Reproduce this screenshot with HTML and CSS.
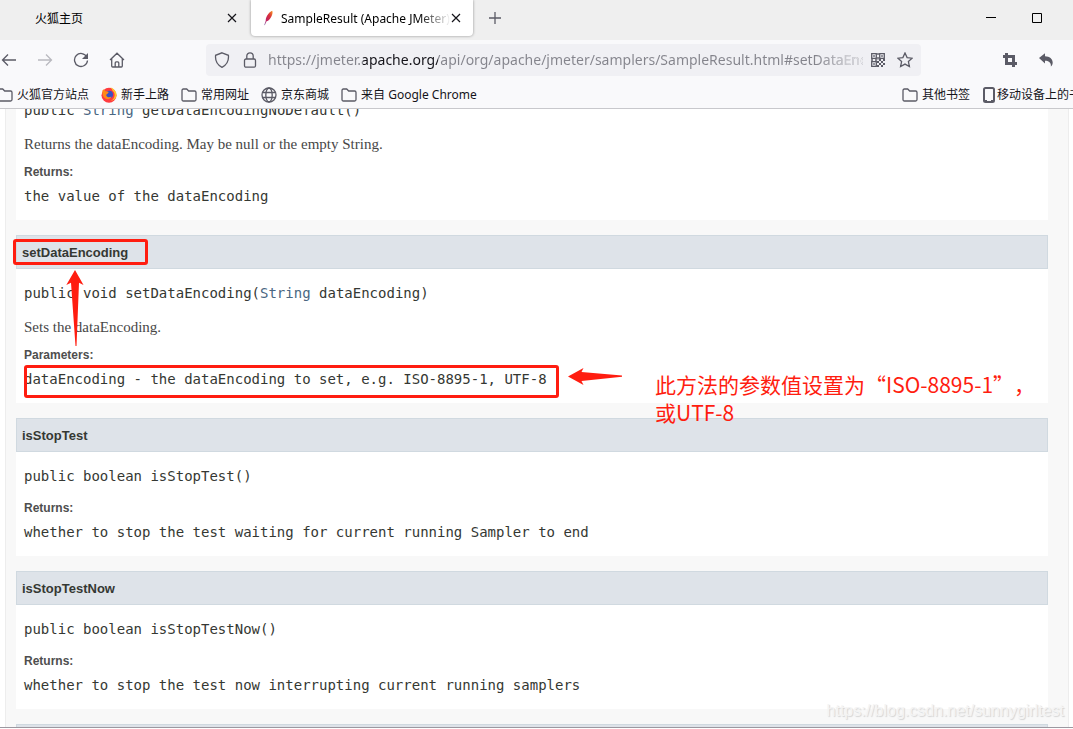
FILE: index.html
```html
<!DOCTYPE html>
<html lang="zh-CN">

<head>
    <meta charset="UTF-8" />
    <meta name="viewport" content="width=device-width, initial-scale=1.0" />
    <title>SampleResult (Apache JMeter)</title>
    <link rel="stylesheet" href="styles.css">
</head>

<body>
    <header class="browser">
        <div class="tabs">
            <div class="tab">
                <span class="tab-title">火狐主页</span>
                <button class="close" aria-label="Close tab"><svg width="10" height="10" viewBox="0 0 10 10"><path d="M1 1l8 8M9 1L1 9" /></svg></button>
            </div>
            <div class="tab active">
                <svg class="feather" width="16" height="16" viewBox="0 0 16 16">
                    <defs>
                        <linearGradient id="plume" x1="1" y1="0" x2="0" y2="1">
                            <stop offset="0" stop-color="#f69923" />
                            <stop offset=".35" stop-color="#d9303a" />
                            <stop offset=".7" stop-color="#be2064" />
                            <stop offset="1" stop-color="#8a7fb8" />
                        </linearGradient>
                    </defs>
                    <path fill="url(#plume)" d="M12.200.8c.8 1.400.2 3.700-.8 5.700-1 2-2 3.300-3.400 4.300l-1.400.4-1.800 4-.6-.2 1.500-4.300c-.1-2.600 1-4.800 2.600-6.800C9.500 2.500 11 1.200 12.200.8z" />
                </svg>
                <span class="tab-title">SampleResult (Apache JMeter)</span>
                <button class="close" aria-label="Close tab"><svg width="10" height="10" viewBox="0 0 10 10"><path d="M1 1l8 8M9 1L1 9" /></svg></button>
            </div>
            <button class="new-tab" aria-label="New tab"><svg width="12" height="12" viewBox="0 0 12 12"><path d="M6 0v12M0 6h12" /></svg></button>
            <div class="window-buttons">
                <button aria-label="Minimize"><svg width="10" height="10" viewBox="0 0 10 10"><path d="M0 4.500h10" /></svg></button>
                <button aria-label="Maximize"><svg width="10" height="10" viewBox="0 0 10 10"><path d="M.5.5h9v9h-9z" /></svg></button>
            </div>
        </div>

        <div class="toolbar">
            <div class="nav-buttons">
                <button aria-label="Back"><svg width="16" height="16" viewBox="0 0 16 16"><path d="M15 8H2M7 2.500L1.500 8 7 13.500" /></svg></button>
                <button aria-label="Forward" disabled><svg width="16" height="16" viewBox="0 0 16 16"><path d="M1 8h13M9 2.500L14.500 8 9 13.500" /></svg></button>
                <button aria-label="Reload"><svg width="16" height="16" viewBox="0 0 16 16"><path d="M13.800 5A6.500 6.500 0 1 0 14.500 8.500" /><path class="solid" d="M15 1v6H9z" /></svg></button>
                <button aria-label="Home"><svg width="16" height="16" viewBox="0 0 16 16"><path d="M1 8l7-6.800L15 8M2.700 6.700V14c0 .7.4 1 1 1h8.600c.6 0 1-.3 1-1V6.700M6.200 15v-4c0-.7.4-1.100 1-1.100h1.600c.6 0 1 .4 1 1.100v4" /></svg></button>
            </div>
            <div class="urlbar">
                <svg width="16" height="16" viewBox="0 0 16 16"><path d="M8 .8l6.400 2.500c.5 4.800-1 9.400-6.400 12-5.400-2.600-6.900-7.200-6.400-12z" /></svg>
                <svg width="16" height="16" viewBox="0 0 16 16"><rect x="2.500" y="7" width="11" height="8.200" rx="1.500" /><path d="M4.800 7V4a3.200 3.200 0 0 1 6.400 0v3" /></svg>
                <input type="text" class="address" aria-label="Address" spellcheck="false" value="https://jmeter.apache.org/api/org/apache/jmeter/samplers/SampleResult.html#setDataEncoding-java.lang.String-">
                <svg width="14" height="14" viewBox="0 0 14 14">
                    <path d="M.7.700h4.600v4.600H.7zM8.700.700h4.600v4.600H8.700zM.7 8.700h4.600v4.600H.7z" />
                    <path class="solid" d="M2.200 2.200h1.600v1.600H2.200zM10.200 2.200h1.600v1.600h-1.600zM2.200 10.200h1.600v1.600H2.200zM6.300 0h1.400v2H6.300zM6.300 4h1.400v2.500H6.300zM0 6.300h2v1.400H0zM4 6.300h2v1.400H4zM8 6h2v2H8zM12 6h2v2h-2zM10 8h2v2h-2zM6 8h2v2H6zM8 10h2v2H8zM12 10h2v2h-2zM10 12h2v2h-2zM6 12h2v2H6z" />
                </svg>
                <button aria-label="Bookmark this page"><svg width="16" height="16" viewBox="0 0 16 16"><path d="M8 1l2.100 4.600 5 .6-3.700 3.400 1 5L8 12.100l-4.400 2.500 1-5L.9 6.200l5-.6z" /></svg></button>
            </div>
            <div class="tools">
                <button aria-label="Screenshot"><svg width="14" height="14" viewBox="0 0 14 14"><path class="bold" d="M3.500 0v10.500H14M0 3.500h10.500V14" /></svg></button>
                <button aria-label="Undo"><svg width="14" height="14" viewBox="0 0 14 14"><path class="solid" d="M0 5L6 .3v3c5 0 8.300 3.500 7.600 7.200-.2 1.300-.8 2.300-1.800 3 .6-3.600-1.800-5.600-5.800-5.700v2.600z" /></svg></button>
            </div>
        </div>

        <nav class="bookmarks">
            <a href="#"><svg width="16" height="16" viewBox="0 0 16 16"><path d="M1 3.500C1 2.600 1.500 2 2.400 2h3.300l2 2h5.900c.9 0 1.400.6 1.400 1.500v7c0 .9-.5 1.500-1.400 1.500H2.400C1.500 14 1 13.400 1 12.500z" /></svg>火狐官方站点</a>
            <a href="#">
                <svg width="16" height="16" viewBox="0 0 16 16">
                    <circle class="fox-body" cx="8" cy="8.300" r="7.500" />
                    <path class="fox-flame" d="M9 .3c1.500 1 2.300 2.200 2.500 3.400 2 1.500 2.800 4 1.700 6.600-.7 1.700-2 2.800-3.500 3.500 4-.2 6-3.300 5.900-6.200C15.400 4.500 13 1.500 9 .3z" />
                    <circle class="fox-globe" cx="8.200" cy="7.500" r="3.800" />
                    <path class="fox-head" d="M1.500 3.200L3 2.200l1.500 2c1.200-.2 2.300.1 3.300.9L6.500 6.700c-.5.500-1.200.6-1.300 1.500 1 2.400 3 2.500 5.300 1.300-1 2.600-3.600 3.400-5.700 2.300C2 10.400 1 7 1.500 3.200z" />
                </svg>新手上路</a>
            <a href="#"><svg width="16" height="16" viewBox="0 0 16 16"><path d="M1 3.500C1 2.600 1.500 2 2.400 2h3.300l2 2h5.900c.9 0 1.400.6 1.400 1.500v7c0 .9-.5 1.500-1.400 1.500H2.400C1.500 14 1 13.400 1 12.500z" /></svg>常用网址</a>
            <a href="#"><svg width="16" height="16" viewBox="0 0 16 16"><circle cx="8" cy="8" r="7" /><ellipse cx="8" cy="8" rx="3.200" ry="7" /><path d="M1.500 5.500h13M1.500 10.500h13" /></svg>京东商城</a>
            <a href="#"><svg width="16" height="16" viewBox="0 0 16 16"><path d="M1 3.500C1 2.600 1.500 2 2.400 2h3.300l2 2h5.900c.9 0 1.400.6 1.400 1.500v7c0 .9-.5 1.500-1.400 1.500H2.400C1.500 14 1 13.400 1 12.500z" /></svg>来自 Google Chrome</a>
            <div class="bookmarks-right">
                <a href="#"><svg width="16" height="16" viewBox="0 0 16 16"><path d="M1 3.500C1 2.600 1.500 2 2.400 2h3.300l2 2h5.900c.9 0 1.400.6 1.400 1.500v7c0 .9-.5 1.500-1.400 1.500H2.400C1.500 14 1 13.400 1 12.500z" /></svg>其他书签</a>
                <a href="#" class="mobile"><svg width="12" height="16" viewBox="0 0 12 16"><rect class="phone" x="1" y="1" width="10" height="14" rx="1.500" /><path class="phone" d="M1 14h3M8 14h3" /></svg>移动设备上的书签</a>
            </div>
        </nav>
    </header>

    <main class="page">
        <div class="details">
            <section class="method">
                <div class="method-body">
                    <pre>public <a href="#">String</a> getDataEncodingNoDefault()</pre>
                    <p>Returns the dataEncoding. May be null or the empty String.</p>
                    <dl>
                        <dt>Returns:</dt>
                        <dd>the value of the dataEncoding</dd>
                    </dl>
                </div>
            </section>

            <section class="method">
                <h4>setDataEncoding</h4>
                <div class="method-body">
                    <pre>public void setDataEncoding(<a href="#">String</a> dataEncoding)</pre>
                    <p>Sets the dataEncoding.</p>
                    <dl>
                        <dt>Parameters:</dt>
                        <dd>dataEncoding - the dataEncoding to set, e.g. ISO-8895-1, UTF-8</dd>
                    </dl>
                </div>
                <div class="mark mark-name"></div>
                <svg class="arrow arrow-up" width="18" height="76" viewBox="0 0 18 76"><path d="M9 0l8.500 15-4.500-2.300L10.500 76h-1L5 12.700.3 15z" /></svg>
                <div class="mark mark-param"></div>
                <svg class="arrow arrow-left" width="54" height="17" viewBox="0 0 54 17"><path d="M0 8.500L15.500 0l-2 4L54 7.500v1.200L13.500 13l2 4z" /></svg>
                <div class="note">此方法的参数值设置为“ISO-8895-1”，<br>或UTF-8</div>
            </section>

            <section class="method">
                <h4>isStopTest</h4>
                <div class="method-body">
                    <pre>public boolean isStopTest()</pre>
                    <dl>
                        <dt>Returns:</dt>
                        <dd>whether to stop the test waiting for current running Sampler to end</dd>
                    </dl>
                </div>
            </section>

            <section class="method">
                <h4>isStopTestNow</h4>
                <div class="method-body">
                    <pre>public boolean isStopTestNow()</pre>
                    <dl>
                        <dt>Returns:</dt>
                        <dd>whether to stop the test now interrupting current running samplers</dd>
                    </dl>
                </div>
            </section>

            <section class="method">
                <h4></h4>
            </section>
        </div>
        <div class="watermark">https://blog.csdn.net/sunnygirltest</div>
    </main>
</body>

</html>
```
FILE: styles.css
```css
:root{
    --icon: #5b5b66;
    --chrome: #f9f9fb;
    --red: #ff1d10;
}

*{
    margin: 0;
    padding: 0;
    box-sizing: border-box;
}
body{
    display: flex;
    flex-direction: column;
    height: 100vh;
    overflow: hidden;
    background-color: white;
    font-family: "Noto Sans", "Noto Sans CJK SC", sans-serif;
}
button{
    display: flex;
    background: none;
    border: none;
}
a{
    text-decoration: none;
}
svg{
    flex: none;
    fill: none;
    stroke: var(--icon);
    stroke-width: 1.3;
}
.solid{
    fill: var(--icon);
    stroke: none;
}
.bold{
    stroke-width: 3;
}

/* browser window */
.browser{
    flex: none;
    background-color: var(--chrome);
    border-bottom: 1px solid #c8c8cc;
}
.tabs{
    display: flex;
    align-items: center;
    height: 40px;
    background-color: #efefef;
    font-size: 12px;
    line-height: 20px;
}
.tab{
    display: flex;
    align-items: center;
    width: 251px;
    height: 36px;
    margin-bottom: 4px;
    padding: 0 14px 0 35px;
}
.tab.active{
    width: 222px;
    padding: 0 12px 0 9px;
    background-color: white;
    border-radius: 0 0 4px 4px;
    box-shadow: 0 0 3px rgba(0, 0, 0, .4);
}
.tab-title{
    flex: 1;
    padding-top: 1px;
    overflow: hidden;
    white-space: nowrap;
}
.active .tab-title{
    margin-left: 5px;
    -webkit-mask-image: linear-gradient(to left, transparent, black 32px);
    mask-image: linear-gradient(to left, transparent, black 32px);
}
.tab svg.feather{
    stroke: none;
}
.close svg{
    stroke: #15141a;
    stroke-width: 1.2;
}
.new-tab{
    margin: 0 16px 4px;
}
.window-buttons{
    display: flex;
    gap: 36px;
    margin: 0 31px 4px auto;
}
.window-buttons svg{
    stroke: black;
    stroke-width: 1;
}
.toolbar{
    display: flex;
    align-items: center;
    height: 40px;
    padding-right: 20px;
}
.nav-buttons{
    display: flex;
    gap: 20px;
    width: 206px;
    padding-left: 1px;
}
.nav-buttons button:disabled{
    opacity: .4;
}
.urlbar{
    display: flex;
    align-items: center;
    gap: 12px;
    flex: 1;
    height: 32px;
    padding: 0 8px;
    background-color: #f0f0f4;
    border-radius: 4px;
}
.address{
    flex: 1;
    min-width: 0;
    margin: 0 -4px 0 -2px;
    border: none;
    outline: none;
    font-family: inherit;
    font-size: 14px;
    line-height: 24px;
    /* host name dark, the rest grey, faded out at the end */
    color: transparent;
    background-image: linear-gradient(to left, #f0f0f4, rgba(240, 240, 244, 0) 48px), linear-gradient(to right, #84848c 95px, #15141a 95px, #15141a 170px, #84848c 170px);
    -webkit-background-clip: text;
    background-clip: text;
}
.tools{
    display: flex;
    gap: 22px;
    margin-left: 82px;
}
.bookmarks{
    display: flex;
    align-items: center;
    gap: 12px;
    height: 28px;
    margin-left: -3px;
    padding-top: 1px;
    font-size: 12px;
    line-height: 18px;
    white-space: nowrap;
}
.bookmarks a{
    display: flex;
    align-items: center;
    gap: 4px;
    color: #15141a;
}
.bookmarks-right{
    display: flex;
    gap: 13px;
    width: 171px;
    margin-left: auto;
    overflow: hidden;
}
.bookmarks a.mobile{
    gap: 2px;
}
.phone{
    stroke-width: 2;
}
.fox-body{
    fill: #ff3b3f;
    stroke: none;
}
.fox-flame{
    fill: #ffc52c;
    stroke: none;
}
.fox-globe{
    fill: #3b4fc4;
    stroke: none;
}
.fox-head{
    fill: #ff8a16;
    stroke: none;
}

/* javadoc page */
.page{
    position: relative;
    flex: 1;
    min-height: 0;
    margin-bottom: 1px;
    padding: 0 4px 0 5px;
    overflow: hidden;
    border-bottom: 1px solid #9c98a0;
}
.details{
    padding: 0 20px 0 10px;
    background-color: #f8f8f8;
    border: 1px solid #ededed;
    border-width: 0 1px;
}
.method{
    position: relative;
    margin-bottom: 15px;
    background-color: white;
}
.method:first-child{
    margin-top: -23px;
}
.method h4{
    height: 34px;
    padding: 0 5px;
    background-color: #dee3e9;
    border: 1px solid #d0d9e0;
    color: #353833;
    font: bold 13px/34px "Liberation Sans", Arial, sans-serif;
}
.method-body{
    padding: 14px 8px;
    color: #353833;
}
.method pre,
.method dd{
    font: 14px/20px "DejaVu Sans Mono", monospace;
}
.method pre{
    margin-bottom: 12px;
}
.method pre a{
    color: #4a6782;
}
.method p{
    margin: 14px 0 8px;
    color: #474747;
    font: 15px/20px "Liberation Serif", serif;
}
.method dt{
    margin-bottom: 4px;
    color: #4e4e4e;
    font: bold 12px/20px "Liberation Sans", Arial, sans-serif;
}

/* red notes drawn over the page */
.mark{
    position: absolute;
    border: 3px solid var(--red);
    border-radius: 3px;
}
.mark-name{
    left: -3px;
    top: 4px;
    width: 135px;
    height: 26px;
}
.mark-param{
    left: 8px;
    top: 130px;
    width: 535px;
    height: 33px;
}
.arrow{
    position: absolute;
    fill: var(--red);
    stroke: none;
}
.arrow-up{
    left: 50px;
    top: 35px;
}
.arrow-left{
    left: 552px;
    top: 133px;
}
.note{
    position: absolute;
    z-index: 1;
    left: 639px;
    top: 135px;
    color: var(--red);
    font: 21px/28px "Noto Sans CJK SC", sans-serif;
    text-spacing-trim: space-all;
    white-space: nowrap;
}
.watermark{
    position: absolute;
    right: 9px;
    bottom: 6px;
    color: #f4f4f4;
    font: 16px/20px "Liberation Sans", Arial, sans-serif;
    text-shadow: 1px 1px 1px #d4d4d4;
}
```
